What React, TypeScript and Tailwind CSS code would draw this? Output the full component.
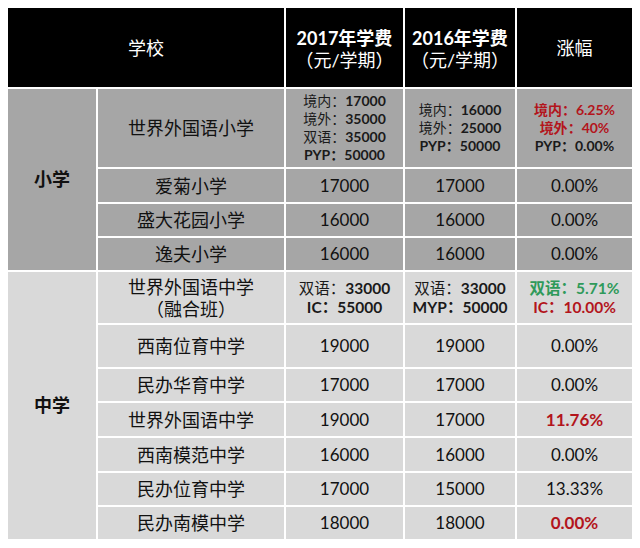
const font = { fontFamily: '"Lato", "Noto Sans CJK SC", sans-serif' }

type Line = { text: string; color?: string }

type RowData = {
  name: string[]
  fee2017: string | Line[]
  fee2016: string | Line[]
  rise: string | Line[]
  riseRed?: boolean
  large?: boolean
}

const primary: RowData[] = [
  {
    name: ['世界外国语小学'],
    fee2017: [{ text: '境内：17000' }, { text: '境外：35000' }, { text: '双语：35000' }, { text: 'PYP：50000' }],
    fee2016: [{ text: '境内：16000' }, { text: '境外：25000' }, { text: 'PYP：50000' }],
    rise: [
      { text: '境内：6.25%', color: 'text-[#b3151c]' },
      { text: '境外：40%', color: 'text-[#b3151c]' },
      { text: 'PYP：0.00%' },
    ],
  },
  { name: ['爱菊小学'], fee2017: '17000', fee2016: '17000', rise: '0.00%' },
  { name: ['盛大花园小学'], fee2017: '16000', fee2016: '16000', rise: '0.00%' },
  { name: ['逸夫小学'], fee2017: '16000', fee2016: '16000', rise: '0.00%' },
]

const middle: RowData[] = [
  {
    name: ['世界外国语中学', '（融合班）'],
    fee2017: [{ text: '双语：33000' }, { text: 'IC：55000' }],
    fee2016: [{ text: '双语：33000' }, { text: 'MYP：50000' }],
    rise: [
      { text: '双语：5.71%', color: 'text-[#2f9a5a]' },
      { text: 'IC：10.00%', color: 'text-[#b3151c]' },
    ],
    large: true,
  },
  { name: ['西南位育中学'], fee2017: '19000', fee2016: '19000', rise: '0.00%' },
  { name: ['民办华育中学'], fee2017: '17000', fee2016: '17000', rise: '0.00%' },
  { name: ['世界外国语中学'], fee2017: '19000', fee2016: '17000', rise: '11.76%', riseRed: true },
  { name: ['西南模范中学'], fee2017: '16000', fee2016: '16000', rise: '0.00%' },
  { name: ['民办位育中学'], fee2017: '17000', fee2016: '15000', rise: '13.33%' },
  { name: ['民办南模中学'], fee2017: '18000', fee2016: '18000', rise: '0.00%', riseRed: true },
]

// CJK labels in the fee columns are plain weight, latin labels and numbers are bold
function Value({
  value,
  red,
  boldLabels,
  large,
}: {
  value: string | Line[]
  red?: boolean
  boldLabels?: boolean
  large?: boolean
}) {
  if (typeof value === 'string') {
    return (
      <span className={red ? 'text-[17px] font-bold text-[#b3151c]' : 'text-[17px] text-[#111]'}>
        {value}
      </span>
    )
  }
  return (
    <div
      className={`flex flex-col items-center font-bold text-[#1a1a1a] ${
        large ? 'text-[15.5px] leading-[19px]' : 'text-[14px] leading-[18px]'
      }`}
    >
      {value.map((l, i) => {
        const [label, num] = l.text.split('：')
        const cjk = /[^\x00-\x7f]/.test(label)
        return (
          <span key={i} className={l.color}>
            <span className={cjk && !boldLabels ? 'font-normal' : ''}>{label}：</span>
            {num}
          </span>
        )
      })}
    </div>
  )
}

export default function App() {
  const cell = 'flex items-center justify-center text-center'
  return (
    <div className="min-h-[548px] w-[640px] bg-white pt-2 pl-2" style={font}>
      <div className="grid grid-cols-[88px_186px_117px_110px_115px] grid-rows-[79px_78px_33px_32px_32px_51px_42px_32px_33px_33px_32px_32px] gap-[2px]">
        <div className={`${cell} col-span-2 bg-black pt-[2px] text-[18px] text-white`}>学校</div>
        <div className={`${cell} flex-col bg-black pt-[3px] text-[18px] font-bold leading-[22px] text-white`}>
          <span>2017年学费</span>
          <span className="font-normal">（元/学期）</span>
        </div>
        <div className={`${cell} flex-col bg-black pt-[3px] text-[18px] font-bold leading-[22px] text-white`}>
          <span>2016年学费</span>
          <span className="font-normal">（元/学期）</span>
        </div>
        <div className={`${cell} bg-black pt-[2px] text-[18px] text-white`}>涨幅</div>

        <div className={`${cell} row-span-4 bg-[#a6a6a6] text-[18px] font-bold text-[#111]`}>小学</div>
        {primary.map((r, i) => (
          <Row key={i} row={r} bg="bg-[#a6a6a6]" />
        ))}

        <div className={`${cell} row-span-7 bg-[#d9d9d9] text-[18px] font-bold text-[#111]`}>中学</div>
        {middle.map((r, i) => (
          <Row key={i} row={r} bg="bg-[#d9d9d9]" />
        ))}
      </div>
    </div>
  )
}

function Row({ row, bg }: { row: RowData; bg: string }) {
  const cell = `flex items-center justify-center text-center ${bg}`
  return (
    <>
      <div className={`${cell} flex-col text-[18px] leading-[22px] text-[#111]`}>
        {row.name.map((n, i) => (
          <span key={i}>{n}</span>
        ))}
      </div>
      <div className={cell}>
        <Value value={row.fee2017} large={row.large} />
      </div>
      <div className={cell}>
        <Value value={row.fee2016} large={row.large} />
      </div>
      <div className={cell}>
        <Value value={row.rise} red={row.riseRed} boldLabels large={row.large} />
      </div>
    </>
  )
}
